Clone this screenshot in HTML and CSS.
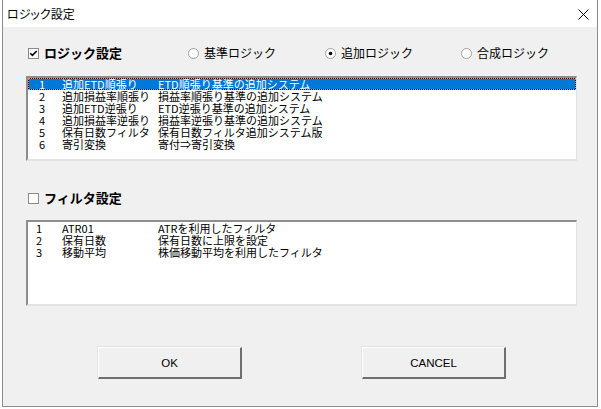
FILE: index.html
```html
<!DOCTYPE html>
<html lang="ja">
<head>
<meta charset="utf-8">
<title>ロジック設定</title>
<link rel="stylesheet" href="styles.css">
</head>
<body>
<div class="dialog">
  <div class="titlebar">
    <span class="title">ロジック設定</span>
    <svg class="close" width="11" height="11" viewBox="0 0 11 11"><path d="M0.5 0.5 L10.5 10.5 M10.5 0.5 L0.5 10.5" stroke="#000" stroke-width="1" fill="none"/></svg>
  </div>
  <div class="body">
    <div class="optrow">
      <label class="chk w160">
        <svg class="box" width="11" height="11" viewBox="0 0 11 11"><rect x="0.5" y="0.5" width="10" height="10" fill="#fff" stroke="#8a8a8a"/><path d="M2.3 5.2 L4.4 7.4 L8.7 3" stroke="#000" stroke-width="1.6" fill="none"/></svg>
        <span class="boldlbl">ロジック設定</span>
      </label>
      <label class="radio w137">
        <svg class="rb" width="11" height="11" viewBox="0 0 11 11"><circle cx="5.5" cy="5.5" r="5" fill="#fff" stroke="#a0a0a0"/></svg>
        <span>基準ロジック</span>
      </label>
      <label class="radio w136">
        <svg class="rb" width="11" height="11" viewBox="0 0 11 11"><circle cx="5.5" cy="5.5" r="5" fill="#fff" stroke="#a0a0a0"/><circle cx="5.5" cy="5.5" r="1.8" fill="#000"/></svg>
        <span>追加ロジック</span>
      </label>
      <label class="radio">
        <svg class="rb" width="11" height="11" viewBox="0 0 11 11"><circle cx="5.5" cy="5.5" r="5" fill="#fff" stroke="#a0a0a0"/></svg>
        <span>合成ロジック</span>
      </label>
    </div>

    <div class="list list1">
      <div class="row sel"><span class="no">1</span><span class="name">追加ETD順張り</span><span class="desc">ETD順張り基準の追加システム</span></div>
      <div class="row"><span class="no">2</span><span class="name">追加損益率順張り</span><span class="desc">損益率順張り基準の追加システム</span></div>
      <div class="row"><span class="no">3</span><span class="name">追加ETD逆張り</span><span class="desc">ETD逆張り基準の追加システム</span></div>
      <div class="row"><span class="no">4</span><span class="name">追加損益率逆張り</span><span class="desc">損益率逆張り基準の追加システム</span></div>
      <div class="row"><span class="no">5</span><span class="name">保有日数フィルタ</span><span class="desc">保有日数フィルタ追加システム版</span></div>
      <div class="row"><span class="no">6</span><span class="name">寄引変換</span><span class="desc">寄付⇒寄引変換</span></div>
    </div>

    <div class="optrow filterrow">
      <label class="chk">
        <svg class="box" width="11" height="11" viewBox="0 0 11 11"><rect x="0.5" y="0.5" width="10" height="10" fill="#fff" stroke="#8a8a8a"/></svg>
        <span class="boldlbl">フィルタ設定</span>
      </label>
    </div>

    <div class="list list2">
      <div class="row"><span class="no">1</span><span class="name">ATR01</span><span class="desc">ATRを利用したフィルタ</span></div>
      <div class="row"><span class="no">2</span><span class="name">保有日数</span><span class="desc">保有日数に上限を設定</span></div>
      <div class="row"><span class="no">3</span><span class="name">移動平均</span><span class="desc">株価移動平均を利用したフィルタ</span></div>
    </div>

    <div class="buttons">
      <button class="btn">OK</button>
      <button class="btn">CANCEL</button>
    </div>
  </div>
</div>
</body>
</html>
```
FILE: styles.css
```css
html, body {
  margin: 0;
  padding: 0;
}
body {
  background: #ffffff;
  width: 601px;
  height: 409px;
  overflow: hidden;
  font-family: "Noto Sans CJK JP", sans-serif;
  color: #000;
}
.dialog {
  margin-left: 2px;
  width: 596px;
  height: 407px;
  box-sizing: border-box;
  border-left: 1px solid #8c8c8c;
  border-right: 1px solid #8c8c8c;
  border-bottom: 1px solid #8c8c8c;
  display: flex;
  flex-direction: column;
}
.titlebar {
  height: 27px;
  background: #ffffff;
  display: flex;
  align-items: center;
  justify-content: space-between;
  padding: 0 8px 0 4px;
  flex: none;
}
.title {
  font-size: 12px;
  font-feature-settings: "palt";
  line-height: 14px;
}
.close {
  display: block;
  margin-top: 1px;
}
.body {
  flex: 1;
  background: #f0f0f0;
  display: flex;
  flex-direction: column;
}
.optrow {
  display: flex;
  align-items: center;
  height: 14px;
  margin-top: 19px;
  padding-left: 25px;
}
.filterrow {
  margin-top: 30px;
}
.chk, .radio {
  display: flex;
  align-items: center;
  flex: none;
}
.w160 { width: 160px; }
.w137 { width: 137px; }
.w136 { width: 136px; }
.box {
  display: block;
  margin-right: 5px;
}
.rb {
  display: block;
  margin-right: 5px;
}
.boldlbl {
  font-size: 13px;
  font-weight: bold;
  line-height: 14px;
}
.radio span {
  font-size: 12px;
  line-height: 14px;
}
.list {
  margin-left: 23px;
  width: 551px;
  box-sizing: border-box;
  background: #ffffff;
  border-top: 2px solid #8e8e8e;
  border-left: 2px solid #8e8e8e;
  border-right: 1px solid #e3e3e3;
  border-bottom: 2px solid #e3e3e3;
}
.list1 {
  margin-top: 16px;
  height: 85px;
}
.list2 {
  margin-top: 15px;
  height: 86px;
}
.row {
  position: relative;
  display: flex;
  height: 12px;
  font-size: 11px;
  line-height: 12px;
  white-space: nowrap;
}
.row.sel {
  background: #0078d7;
  color: #ffffff;
  box-shadow: inset 0 0 0 1px #000;
}
.row.sel::after {
  content: "";
  position: absolute;
  left: 0;
  top: 0;
  right: 0;
  bottom: 0;
  border: 1px dotted #ff8c2a;
}
.no {
  width: 34px;
  padding-left: 11px;
  box-sizing: border-box;
  flex: none;
}
.list2 .no {
  padding-left: 8px;
}
.name {
  width: 96px;
  flex: none;
}
.desc {
  flex: 1;
}
.buttons {
  display: flex;
  gap: 120px;
  margin-top: 41px;
  padding-left: 95px;
}
.btn {
  width: 144px;
  height: 32px;
  box-sizing: border-box;
  background: #f0f0f0;
  border-style: solid;
  border-width: 1px 2px 2px 1px;
  border-color: #ffffff #6f6f6f #6f6f6f #ffffff;
  box-shadow: -1px -1px 0 #e3e3e3;
  font-family: "Liberation Sans", Arial, sans-serif;
  font-size: 11.5px;
  color: #000;
  padding: 0;
  margin: 0;
}
```
